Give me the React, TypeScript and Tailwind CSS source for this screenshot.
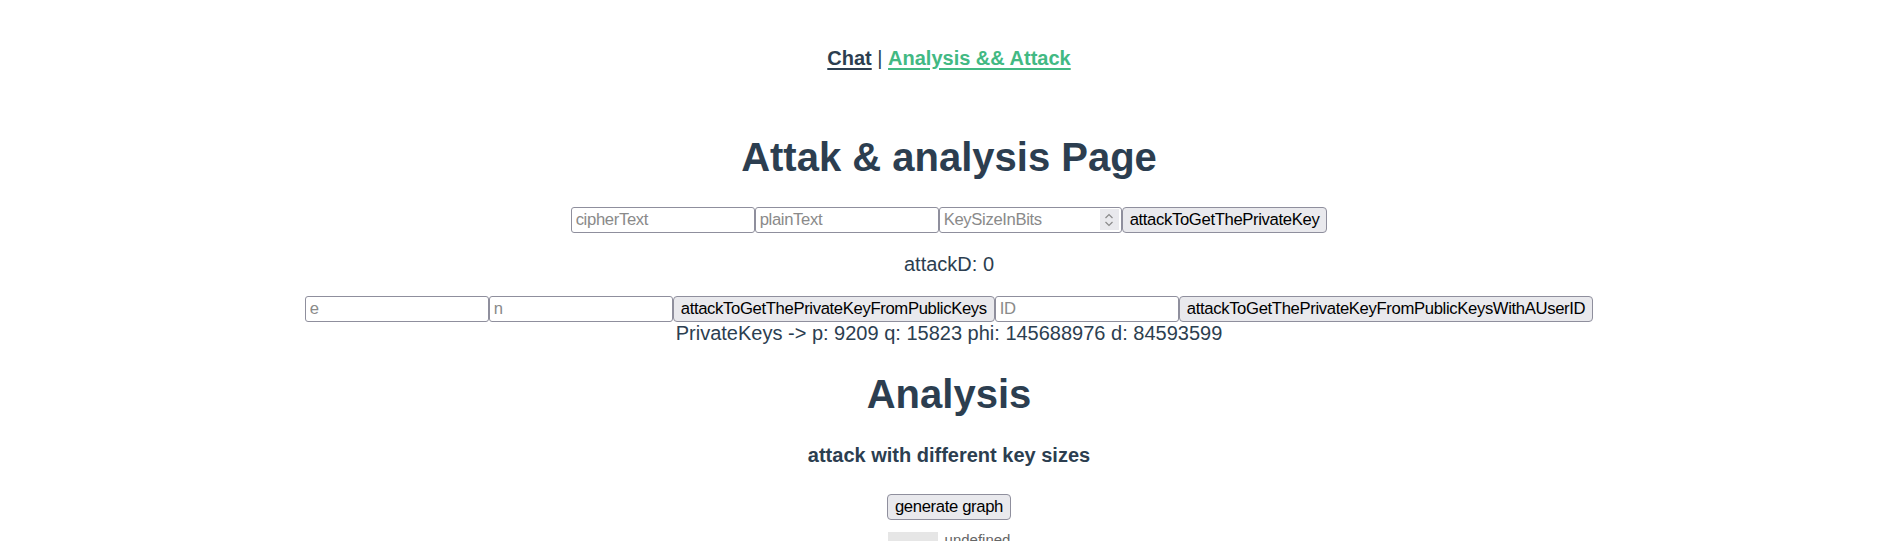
import React from "react";

const inputCls =
  "w-[184px] h-[26px] box-border border border-[#8f8f9d] rounded-[3px] bg-white px-[4px] text-[16.67px] text-black placeholder:text-[#8a8a8a] outline-none tracking-[-0.35px]";
const btnCls =
  "h-[26px] box-border border border-[#8f8f9d] rounded-[4px] bg-[#e9e9ed] px-[7px] text-[16.67px] text-black leading-[20px] whitespace-nowrap tracking-[-0.35px]";

function Spinner() {
  return (
    <div className="w-[19px] h-[21px] bg-[#e9e9ed] flex items-center justify-center mr-[2px]">
      <svg width="12" height="18" viewBox="0 0 12 18" fill="none" stroke="#8a8a8a" strokeWidth="1.2">
        <path d="M2.5 7 L6 3.5 L9.5 7" />
        <path d="M2.5 11 L6 14.5 L9.5 11" />
      </svg>
    </div>
  );
}

export default function App() {
  return (
    <div className="min-h-[541px] bg-white pt-[9px] pl-[7px] text-center text-[#2c3e50] font-['Liberation_Sans',Arial,sans-serif] text-[20px] leading-[23px]">
      <div className="py-[37.5px]">
        <a className="font-bold underline decoration-[2px] underline-offset-[3px] text-[#2c3e50]">Chat</a>
        <span> | </span>
        <a className="font-bold underline decoration-[2px] underline-offset-[3px] text-[#42b983]">Analysis &amp;&amp; Attack</a>
      </div>

      <h1 className="text-[40px] leading-[46px] font-bold my-[26.8px]">Attak &amp; analysis Page</h1>

      <div className="h-[26px] flex justify-center items-center">
        <input className={inputCls} placeholder="cipherText" />
        <input className={inputCls} placeholder="plainText" />
        <div className="w-[183px] h-[26px] box-border border border-[#8f8f9d] rounded-[3px] bg-white flex items-center">
          <input
            className="flex-1 min-w-0 h-full bg-transparent px-[4px] text-[16.67px] text-black placeholder:text-[#8a8a8a] outline-none tracking-[-0.35px]"
            placeholder="KeySizeInBits"
          />
          <Spinner />
        </div>
        <button className={btnCls}>attackToGetThePrivateKey</button>
      </div>

      <p className="my-[20px]">attackD: 0</p>

      <div className="h-[26px] flex justify-center items-center">
        <input className={inputCls} placeholder="e" />
        <input className={inputCls} placeholder="n" />
        <button className={btnCls}>attackToGetThePrivateKeyFromPublicKeys</button>
        <input className={inputCls} placeholder="ID" />
        <button className={btnCls}>attackToGetThePrivateKeyFromPublicKeysWithAUserID</button>
      </div>

      <div>PrivateKeys -&gt; p: 9209 q: 15823 phi: 145688976 d: 84593599</div>

      <h1 className="text-[40px] leading-[46px] font-bold my-[26.8px]">Analysis</h1>

      <h4 className="text-[20px] leading-[23px] font-bold mt-[26.6px] mb-[26.6px]">attack with different key sizes</h4>

      <div className="flex justify-center">
        <button className={btnCls}>generate graph</button>
      </div>

      <div className="flex justify-center items-start mt-[11px] h-[20px]">
        <div className="w-[50px] h-[15px] bg-[#e6e6e6] mt-[1px]"></div>
        <span className="ml-[7px] text-[15px] leading-[17px] text-[#666666]">undefined</span>
      </div>
    </div>
  );
}
